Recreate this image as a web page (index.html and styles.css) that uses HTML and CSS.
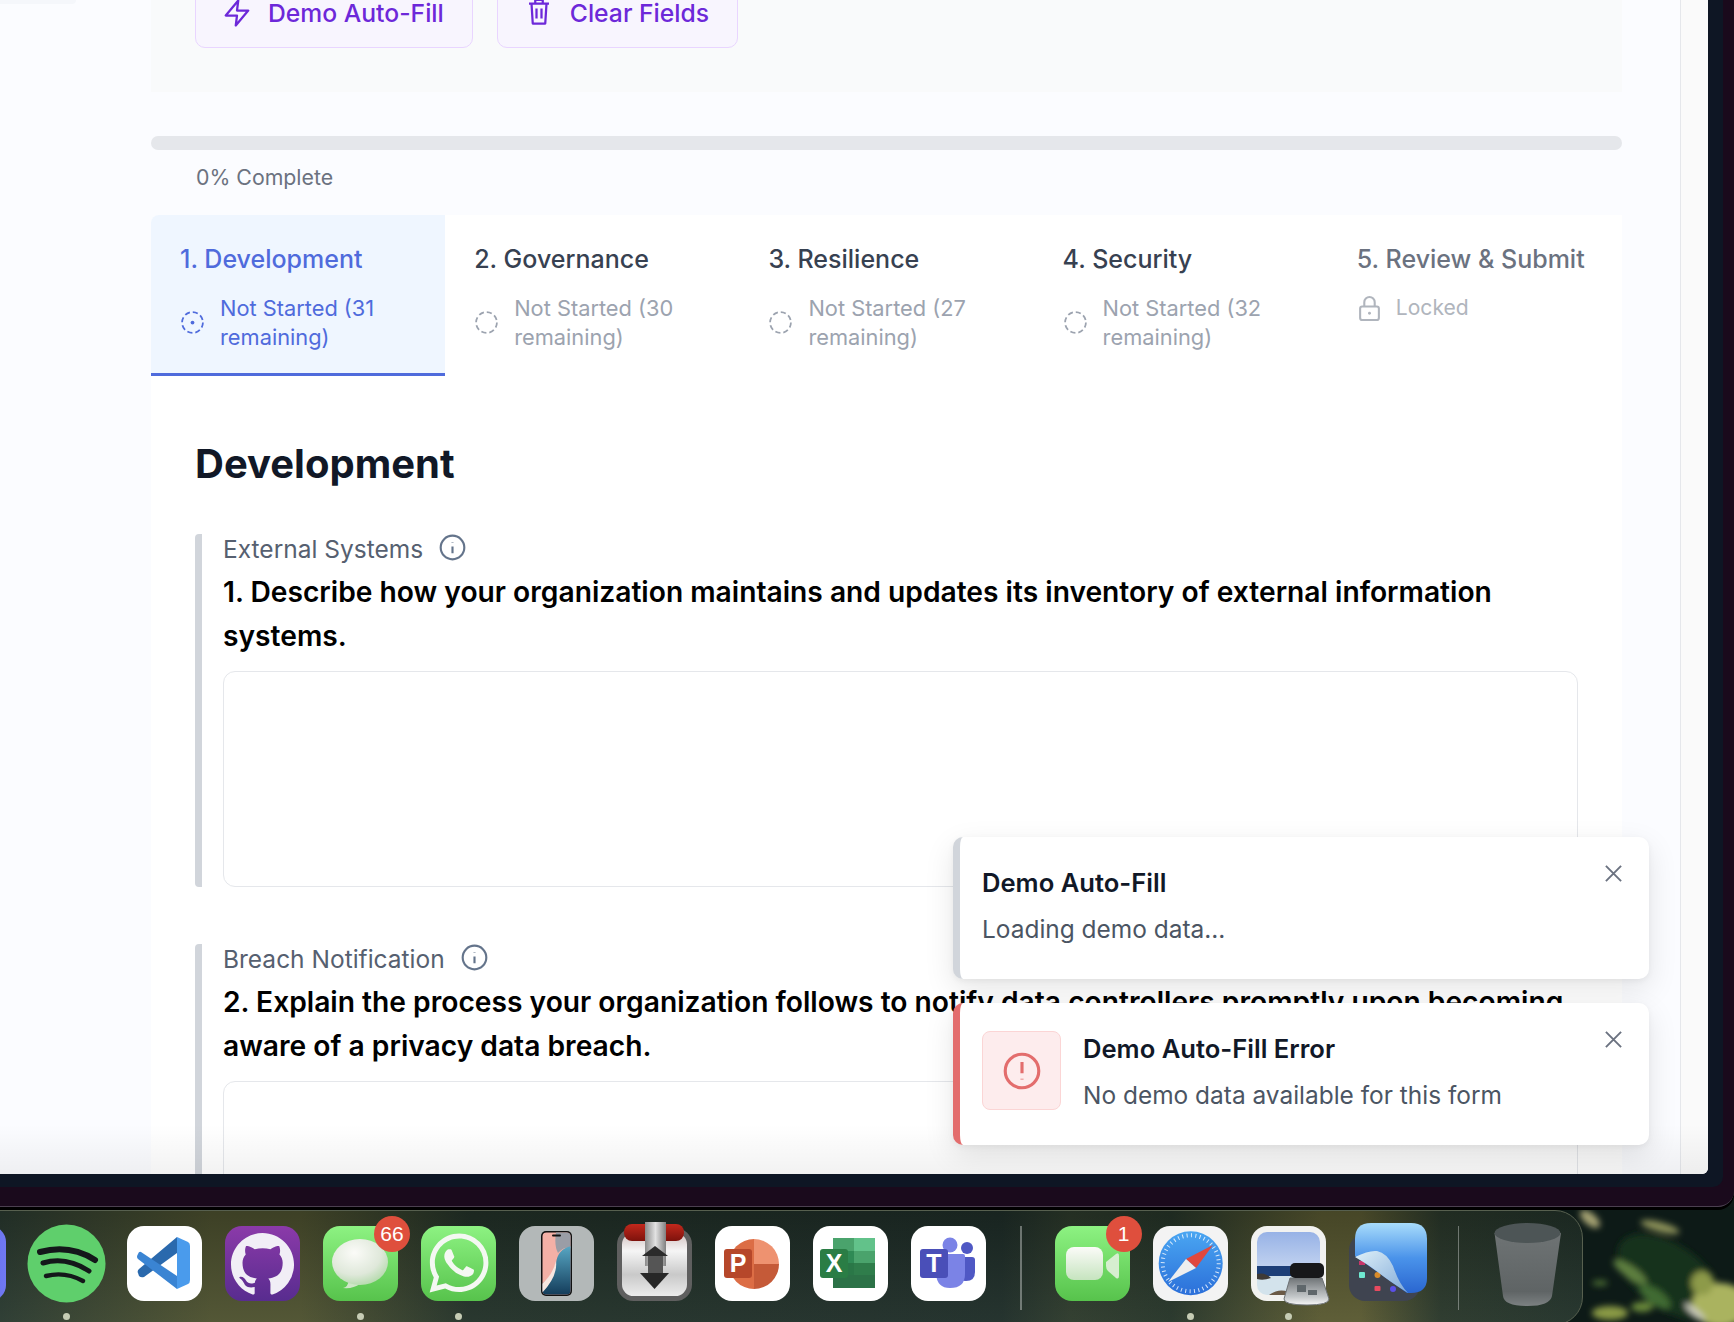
FILE: index.html

```html
<!DOCTYPE html>
<html lang="en">
<head>
    <meta charset="UTF-8">
    <meta name="viewport" content="width=device-width, initial-scale=1.0">
    <title>Demo Form</title>
    <link rel="stylesheet" href="styles.css">
</head>
<body>
<div class="monitor">
  <div class="frame">
    <div class="window">
      <div class="side-nub"></div>
      <div class="main">
        <div class="demo-panel">
          <button class="demo-btn">
            <svg class="btn-icon" viewBox="0 0 24 24"><polygon points="13 2 3 14 12 14 11 22 21 10 12 10"/></svg>
            Demo Auto-Fill
          </button>
          <button class="demo-btn">
            <svg class="btn-icon btn-icon-trash" viewBox="0 0 24 24"><path d="M4 6h16M9 6V3h6v3M6 6l1 16h10l1-16M10 10v8M14 10v8"/></svg>
            Clear Fields
          </button>
        </div>

        <div class="progress"></div>
        <p class="progress-label">0% Complete</p>

        <div class="card">
          <div class="tabs">
            <div class="tab active">
              <div class="tab-title">1. Development</div>
              <div class="tab-status">
                <svg class="status-icon" viewBox="0 0 24 24"><circle class="dash" cx="12" cy="12" r="10"/><circle class="dot" cx="12" cy="12" r="1.8"/></svg>
                <span>Not Started (31 remaining)</span>
              </div>
            </div>
            <div class="tab">
              <div class="tab-title">2. Governance</div>
              <div class="tab-status">
                <svg class="status-icon" viewBox="0 0 24 24"><circle class="dash" cx="12" cy="12" r="10"/></svg>
                <span>Not Started (30 remaining)</span>
              </div>
            </div>
            <div class="tab">
              <div class="tab-title">3. Resilience</div>
              <div class="tab-status">
                <svg class="status-icon" viewBox="0 0 24 24"><circle class="dash" cx="12" cy="12" r="10"/></svg>
                <span>Not Started (27 remaining)</span>
              </div>
            </div>
            <div class="tab">
              <div class="tab-title">4. Security</div>
              <div class="tab-status">
                <svg class="status-icon" viewBox="0 0 24 24"><circle class="dash" cx="12" cy="12" r="10"/></svg>
                <span>Not Started (32 remaining)</span>
              </div>
            </div>
            <div class="tab locked">
              <div class="tab-title">5. Review &amp; Submit</div>
              <div class="tab-status">
                <svg class="status-icon lock" viewBox="0 0 24 24"><rect x="3" y="10" width="18" height="13" rx="2"/><path d="M7 10V6a5 5 0 0 1 10 0v4"/><circle class="lock-dot" cx="12" cy="16.5" r="1.4"/></svg>
                <span>Locked</span>
              </div>
            </div>
          </div>

          <div class="section">
            <h2 class="section-title">Development</h2>

            <div class="field">
              <div class="field-label">External Systems
                <svg class="info" viewBox="0 0 24 24"><circle cx="12" cy="12" r="10.5"/><path d="M12 11v6M12 7v.6"/></svg>
              </div>
              <div class="question">1. Describe how your organization maintains and updates its inventory of external information systems.</div>
              <textarea class="answer"></textarea>
            </div>

            <div class="field">
              <div class="field-label">Breach Notification
                <svg class="info" viewBox="0 0 24 24"><circle cx="12" cy="12" r="10.5"/><path d="M12 11v6M12 7v.6"/></svg>
              </div>
              <div class="question">2. Explain the process your organization follows to notify data controllers promptly upon becoming aware of a privacy data breach.</div>
              <textarea class="answer"></textarea>
            </div>
          </div>
        </div>
      </div>
      <div class="strip"></div>

      <div class="toasts">
        <div class="toast">
          <div class="toast-text">
            <div class="toast-title">Demo Auto-Fill</div>
            <div class="toast-body">Loading demo data...</div>
          </div>
          <svg class="toast-close" viewBox="0 0 20 20"><path d="M2 2l16 16M18 2L2 18"/></svg>
        </div>
        <div class="toast toast-error">
          <div class="toast-icon">
            <svg viewBox="0 0 34 34"><circle cx="17" cy="17" r="15"/><path d="M17 9v10M17 24v.6"/></svg>
          </div>
          <div class="toast-text">
            <div class="toast-title">Demo Auto-Fill Error</div>
            <div class="toast-body">No demo data available for this form</div>
          </div>
          <svg class="toast-close" viewBox="0 0 20 20"><path d="M2 2l16 16M18 2L2 18"/></svg>
        </div>
      </div>
    </div>
  </div>
</div>

<div class="desktop">
  <!-- blurred foliage of the wallpaper -->
  <svg class="wallpaper" viewBox="0 0 1734 115">
    <defs><filter id="soft" x="-30%" y="-30%" width="160%" height="160%"><feGaussianBlur stdDeviation="3"/></filter></defs>
    <g filter="url(#soft)">
      <ellipse cx="1670" cy="70" rx="60" ry="32" fill="#16301d" transform="rotate(35 1670 70)"/>
      <ellipse cx="1590" cy="12" rx="12" ry="6" fill="#a5a272" transform="rotate(40 1590 12)"/>
      <ellipse cx="1660" cy="20" rx="20" ry="5" fill="#8b9058" transform="rotate(15 1660 20)"/>
      <ellipse cx="1630" cy="65" rx="20" ry="6" fill="#5f8040" transform="rotate(35 1630 65)"/>
      <ellipse cx="1655" cy="90" rx="18" ry="8" fill="#3f6a32" transform="rotate(35 1655 90)"/>
      <ellipse cx="1720" cy="98" rx="28" ry="22" fill="#aab35f"/>
      <ellipse cx="1702" cy="76" rx="11" ry="12" fill="#8d9a48"/>
      <ellipse cx="1610" cy="106" rx="18" ry="7" fill="#8a9a45"/>
      <ellipse cx="1642" cy="100" rx="11" ry="5" fill="#6a8a3a"/>
      <ellipse cx="1600" cy="76" rx="8" ry="3" fill="#4a6a30"/>
      <ellipse cx="1695" cy="105" rx="13" ry="3" fill="#d0d0c4" transform="rotate(40 1695 105)"/>
    </g>
  </svg>
  <div class="dock">
    <div class="dock-item"><svg viewBox="0 0 75 75"><defs><linearGradient id="launch" x1="0" y1="0" x2="1" y2="0"><stop offset="0" stop-color="#4f5fe0"/><stop offset="1" stop-color="#7078f2"/></linearGradient></defs><rect width="75" height="75" rx="16" fill="url(#launch)"/></svg></div>

    <!-- spotify -->
    <div class="dock-item running"><svg viewBox="0 0 75 75"><circle cx="37.5" cy="37.5" r="39" fill="#5fcf6c"/><g fill="none" stroke="#14181a" stroke-linecap="round"><path d="M11 26Q41 18 66 34" stroke-width="6"/><path d="M14 37Q37 30 60 45" stroke-width="5"/><path d="M17 50Q36 45 54 55" stroke-width="4.4"/></g></svg></div>

    <!-- vs code -->
    <div class="dock-item"><svg viewBox="0 0 75 75"><rect width="75" height="75" rx="17" fill="#fff"/><path d="M50 11V27L17 51Q14 52 12 50L11 47Q10 45 12 43Z" fill="#2a69ad"/><path d="M14 26L50 50V63L11 33Q9 31 11 28Q12 25 14 26Z" fill="#3a84d3"/><path d="M50 11L61 16Q63 17 63 20V54Q63 57 61 58L50 63Z" fill="#4a9bec"/></svg></div>

    <!-- github desktop -->
    <div class="dock-item"><svg viewBox="0 0 75 75"><defs><linearGradient id="gh" x1="0" y1="0" x2="0" y2="1"><stop offset="0" stop-color="#8b3aa9"/><stop offset="1" stop-color="#582c8f"/></linearGradient></defs><rect width="75" height="75" rx="17" fill="url(#gh)"/><g transform="translate(6 7) scale(3.94)"><path fill="#f1eef6" d="M8 0C3.58 0 0 3.58 0 8c0 3.54 2.29 6.53 5.47 7.59.4.07.55-.17.55-.38 0-.19-.01-.82-.01-1.49-2.01.37-2.53-.49-2.69-.94-.09-.23-.48-.94-.82-1.13-.28-.15-.68-.52-.01-.53.63-.01 1.08.58 1.23.82.72 1.21 1.87.87 2.33.66.07-.52.28-.87.51-1.07-1.78-.2-3.64-.89-3.64-3.95 0-.87.31-1.59.82-2.15-.08-.2-.36-1.02.08-2.12 0 0 .67-.21 2.2.82.64-.18 1.32-.27 2-.27.68 0 1.36.09 2 .27 1.53-1.04 2.2-.82 2.2-.82.44 1.1.16 1.92.08 2.12.51.56.82 1.27.82 2.15 0 3.07-1.87 3.75-3.65 3.95.29.25.54.73.54 1.48 0 1.07-.01 1.93-.01 2.2 0 .21.15.46.55.38A8.013 8.013 0 0016 8c0-4.42-3.58-8-8-8z"/></g></svg></div>

    <!-- messages -->
    <div class="dock-item running"><svg viewBox="0 0 75 75"><defs><linearGradient id="gr" x1="0" y1="0" x2="0" y2="1"><stop offset="0" stop-color="#8df282"/><stop offset="1" stop-color="#57c34c"/></linearGradient><radialGradient id="bub" cx=".4" cy=".3" r=".8"><stop offset="0" stop-color="#fbfbf8"/><stop offset=".6" stop-color="#dfe8da"/><stop offset="1" stop-color="#a9d6a0"/></radialGradient></defs><rect width="75" height="75" rx="17" fill="url(#gr)"/><path d="M26 54Q25 61 20 62Q30 63 37 58Z" fill="#cfe6c8"/><ellipse cx="37" cy="36" rx="28" ry="23" fill="url(#bub)"/></svg><span class="dock-badge">66</span></div>

    <!-- whatsapp -->
    <div class="dock-item running"><svg viewBox="0 0 75 75"><rect width="75" height="75" rx="17" fill="url(#gr)"/><g transform="translate(8.5 7.5) scale(2.46)"><path fill="#f4f8f2" d="M17.472 14.382c-.297-.149-1.758-.867-2.03-.967-.273-.099-.471-.148-.67.15-.197.297-.767.966-.94 1.164-.173.199-.347.223-.644.075-.297-.15-1.255-.463-2.39-1.475-.883-.788-1.48-1.761-1.653-2.059-.173-.297-.018-.458.13-.606.134-.133.298-.347.446-.52.149-.174.198-.298.298-.497.099-.198.05-.371-.025-.52-.075-.149-.669-1.612-.916-2.207-.242-.579-.487-.5-.669-.51-.173-.008-.371-.01-.57-.01-.198 0-.52.074-.792.372-.272.297-1.04 1.016-1.04 2.479 0 1.462 1.065 2.875 1.213 3.074.149.198 2.096 3.2 5.077 4.487.709.306 1.262.489 1.694.625.712.227 1.36.195 1.871.118.571-.085 1.758-.719 2.006-1.413.248-.694.248-1.289.173-1.413-.074-.124-.272-.198-.57-.347m-5.421 7.403h-.004a9.87 9.87 0 01-5.031-1.378l-.361-.214-3.741.982.998-3.648-.235-.374a9.86 9.86 0 01-1.51-5.26c.001-5.45 4.436-9.884 9.888-9.884 2.64 0 5.122 1.03 6.988 2.898a9.825 9.825 0 012.893 6.994c-.003 5.45-4.437 9.884-9.885 9.884m8.413-18.297A11.815 11.815 0 0012.05 0C5.495 0 .16 5.335.157 11.892c0 2.096.547 4.142 1.588 5.945L.057 24l6.305-1.654a11.882 11.882 0 005.683 1.448h.005c6.554 0 11.89-5.335 11.893-11.893a11.821 11.821 0 00-3.48-8.413z"/></g></svg></div>

    <!-- iphone mirroring -->
    <div class="dock-item"><svg viewBox="0 0 75 75"><defs><linearGradient id="wave" x1="0" y1="0" x2="0" y2="1"><stop offset="0" stop-color="#58a7c4"/><stop offset="1" stop-color="#123a58"/></linearGradient><clipPath id="scr"><rect x="23.5" y="6.5" width="28" height="62" rx="4"/></clipPath></defs><rect width="75" height="75" rx="16" fill="#b3b8b8"/><rect x="22" y="5" width="31" height="65" rx="5" fill="#111"/><g clip-path="url(#scr)"><rect x="23" y="6" width="30" height="64" fill="#f4b0a6"/><path d="M37 6Q35 20 39 27Q46 19 53 23V6Z" fill="#9a9da6"/><path d="M53 20Q39 22 37 37Q34 50 23 58V70H53Z" fill="url(#wave)"/><path d="M23 58Q34 48 37 35Q39 50 23 67Z" fill="#f6e6e0"/></g><rect x="33" y="8.5" width="9" height="2" rx="1" fill="#111"/></svg></div>

    <!-- transmit -->
    <div class="dock-item"><svg viewBox="0 0 75 75"><defs><linearGradient id="tbox" x1="0" y1="0" x2="0" y2="1"><stop offset="0" stop-color="#cdb9b8"/><stop offset=".3" stop-color="#f5f5f5"/><stop offset=".65" stop-color="#c9c9c9"/><stop offset="1" stop-color="#f0f0f0"/></linearGradient><linearGradient id="tsilver" x1="0" y1="0" x2="1" y2="0"><stop offset="0" stop-color="#8a8a8a"/><stop offset=".5" stop-color="#e2e2e2"/><stop offset="1" stop-color="#808080"/></linearGradient><linearGradient id="tred" x1="0" y1="0" x2="0" y2="1"><stop offset="0" stop-color="#c2281c"/><stop offset="1" stop-color="#7d120c"/></linearGradient></defs><rect x="2.5" y="4.5" width="70" height="68" rx="14" fill="url(#tbox)" stroke="#5f5f5f" stroke-width="5"/><rect x="7" y="-2" width="60" height="17" rx="8" fill="url(#tred)"/><rect x="28" y="-4" width="21" height="44" fill="url(#tsilver)"/><path d="M38 20L51 30H25Z" fill="#2b2b2b"/><rect x="31" y="30" width="15" height="18" fill="#555"/><path d="M23 47H52L37.5 63Z" fill="#272727"/></svg></div>

    <!-- powerpoint -->
    <div class="dock-item"><svg viewBox="0 0 75 75"><rect width="75" height="75" rx="17" fill="#fff"/><path d="M39 13A25 25 0 0 0 39 63Z" fill="#dc6d45"/><path d="M39 13A25 25 0 0 1 64 38H39Z" fill="#ee9270"/><path d="M39 38H64A25 25 0 0 1 39 63Z" fill="#c55a38"/><rect x="9" y="23" width="28" height="29" rx="3" fill="#b6472a"/><text class="app-letter" x="23" y="46">P</text></svg></div>

    <!-- excel -->
    <div class="dock-item"><svg viewBox="0 0 75 75"><rect width="75" height="75" rx="17" fill="#fff"/><rect x="20" y="12" width="21" height="13" fill="#4aa36c"/><rect x="41" y="12" width="21" height="13" fill="#62c28a"/><rect x="20" y="25" width="21" height="12" fill="#2f8a55"/><rect x="41" y="25" width="21" height="12" fill="#4aa36c"/><rect x="20" y="37" width="21" height="12" fill="#2a7747"/><rect x="41" y="37" width="21" height="12" fill="#2f7d4b"/><rect x="20" y="49" width="42" height="13" fill="#2c7247"/><rect x="7" y="23" width="28" height="29" rx="3" fill="#2a7d45"/><text class="app-letter" x="21" y="46">X</text></svg></div>

    <!-- teams -->
    <div class="dock-item"><svg viewBox="0 0 75 75"><rect width="75" height="75" rx="17" fill="#fff"/><circle cx="39" cy="19" r="7.5" fill="#7b83e6"/><circle cx="56" cy="22" r="6" fill="#4f58c4"/><path d="M46 31H61Q64 31 64 34V46Q64 55 55 55Q48 55 46 50Z" fill="#4f58c4"/><path d="M26 28H52Q54 28 54 30V48Q54 62 39 62Q26 62 25 48Z" fill="#7b83e6"/><rect x="9" y="23" width="28" height="29" rx="3" fill="#4a4fb8"/><text class="app-letter" x="23" y="46">T</text></svg></div>

    <div class="dock-sep"></div>

    <!-- facetime -->
    <div class="dock-item"><svg viewBox="0 0 75 75"><defs><linearGradient id="ftb" x1="0" y1="0" x2="0" y2="1"><stop offset="0" stop-color="#fbfbf8"/><stop offset="1" stop-color="#c6e4bf"/></linearGradient></defs><rect width="75" height="75" rx="17" fill="url(#gr)"/><rect x="11" y="21" width="37" height="33" rx="8" fill="url(#ftb)"/><path d="M51 36L61 28Q64 26 64 30V49Q64 54 61 52L53 45Q51 43 51 40Z" fill="#d6eed0"/></svg><span class="dock-badge">1</span></div>

    <!-- safari -->
    <div class="dock-item running"><svg viewBox="0 0 75 75"><defs><linearGradient id="saf" x1="0" y1="0" x2="0" y2="1"><stop offset="0" stop-color="#4aa6f2"/><stop offset="1" stop-color="#2b6fd9"/></linearGradient></defs><rect width="75" height="75" rx="17" fill="#f3f3f3"/><circle cx="37.7" cy="37.3" r="32" fill="url(#saf)"/><circle cx="37.7" cy="37.3" r="28" fill="none" stroke="#fff" stroke-width="4" stroke-dasharray="1 3.4" opacity=".8"/><path d="M60 19L33 33L43 42Z" fill="#e0483e"/><path d="M15 56L43 42L33 33Z" fill="#eeeeee"/></svg></div>

    <!-- preview -->
    <div class="dock-item running"><svg viewBox="0 0 75 75"><defs><linearGradient id="sky" x1="0" y1="0" x2="0" y2="1"><stop offset="0" stop-color="#97b2e6"/><stop offset="1" stop-color="#c2d3f0"/></linearGradient><linearGradient id="glass" x1="0" y1="0" x2="0" y2="1"><stop offset="0" stop-color="#6f7477"/><stop offset=".7" stop-color="#c4c8ca"/><stop offset="1" stop-color="#f7f7f7"/></linearGradient><clipPath id="photo"><rect x="6" y="6" width="63" height="63" rx="10"/></clipPath></defs><rect width="75" height="75" rx="16" fill="#f2f2f0"/><g clip-path="url(#photo)"><rect x="6" y="6" width="63" height="36" fill="url(#sky)"/><rect x="6" y="40" width="63" height="10" fill="#1d3f78"/><rect x="6" y="50" width="63" height="20" fill="#d3e3ec"/><path d="M6 48Q14 46 20 52Q12 55 6 53Z" fill="#3f3a36"/><path d="M18 69Q30 60 44 69Z" fill="#6b5a46"/></g><path d="M39 52H71L78 73Q78 79 56 79Q33 79 33 73Z" fill="url(#glass)" stroke="#6d7275"/><rect x="46" y="59" width="9" height="7" fill="#5f676b"/><rect x="57" y="64" width="9" height="5" fill="#5f676b"/><rect x="39" y="37" width="34" height="15" rx="5" fill="#17181a"/></svg></div>

    <!-- page curl app -->
    <div class="dock-item"><svg viewBox="0 0 75 75"><defs><linearGradient id="pg" x1="0" y1="0" x2="0" y2="1"><stop offset="0" stop-color="#a8dcfb"/><stop offset=".5" stop-color="#4a93ea"/><stop offset="1" stop-color="#2a66d0"/></linearGradient><linearGradient id="curl" x1="0" y1="0" x2="1" y2="1"><stop offset="0" stop-color="#dff0f8"/><stop offset="1" stop-color="#7fa9d8"/></linearGradient></defs><rect x="0" y="8" width="71" height="67" rx="16" fill="#3f4450"/><path d="M22-3H62Q78-3 78 13V52Q78 67 62 67H58L6 30V13Q6-3 22-3Z" fill="url(#pg)"/><rect x="10" y="35" width="6" height="4" fill="#c9366a"/><rect x="10" y="46" width="6" height="6" rx="1" fill="#6fe8d0"/><circle cx="28.5" cy="49" r="3" fill="#d88a2a"/><rect x="25.5" y="60" width="6" height="5" rx="1" fill="#e84a5f"/><circle cx="44" cy="63" r="3" fill="#5b50e8"/><path d="M6 31Q20 24 28 25Q38 27 44 40Q50 58 59 67Q40 55 30 47Q20 39 6 31Z" fill="url(#curl)"/></svg></div>

    <div class="dock-sep"></div>

    <!-- trash -->
    <div class="dock-item dock-trash"><svg viewBox="0 0 75 75"><defs><linearGradient id="tr" x1="0" y1="0" x2="0" y2="1"><stop offset="0" stop-color="#6e7374"/><stop offset=".8" stop-color="#5f6465"/><stop offset="1" stop-color="#7c8182"/></linearGradient></defs><path d="M.5 7L9 70Q10 80 33.5 80Q56 80 58 70L67 7Z" fill="url(#tr)"/><ellipse cx="33.5" cy="7" rx="33" ry="10" fill="#4d5556"/></svg></div>
  </div>
</div>
</body>
</html>
```

FILE: styles.css

```css
* {
    box-sizing: border-box;
}

html,
body {
    margin: 0;
    padding: 0;
    height: 1322px;
    overflow: hidden;
}

body {
    font-family: Inter, "Noto Sans", sans-serif;
    background-color: #101b18;
    color: #111827;
}

/* screen edges around the browser window */
.monitor {
    height: 1207px;
    background-color: #1a0a1c;
    border-bottom: 1px solid #4b4050;
    border-bottom-right-radius: 16px;
    box-shadow: 0 3px 0 #000;
    position: relative;
    z-index: 1;
}

.frame {
    width: 1723px;
    height: 1187px;
    background-color: #0e1624;
    border-bottom-right-radius: 10px;
}

.window {
    position: relative;
    display: flex;
    width: 1708px;
    height: 1174px;
    overflow: hidden;
    background-color: #fbfcff;
    border-bottom-right-radius: 6px;
}

/* grey fade along the bottom edge */
.window::after {
    content: "";
    position: absolute;
    left: 0;
    right: 0;
    bottom: 0;
    height: 50px;
    background: linear-gradient(rgba(0, 0, 0, 0), rgba(0, 0, 0, 0.05));
}

.side-nub {
    position: absolute;
    top: 0;
    left: 0;
    width: 76px;
    height: 4px;
    background-color: #f5f7fb;
    border-bottom-right-radius: 4px;
}

.main {
    flex: 1;
    min-width: 0;
    padding: 0 58px 0 151px;
}

.strip {
    width: 28px;
    background-color: #fafafa;
    border-left: 1px solid #e5e7eb;
}

/* demo buttons, the top of this panel is scrolled out of view */
.demo-panel {
    display: flex;
    align-items: flex-end;
    gap: 24px;
    height: 92px;
    padding: 0 0 44px 44px;
    overflow: hidden;
    background-color: #f9fafb;
}

.demo-btn {
    display: flex;
    flex-shrink: 0;
    align-items: center;
    gap: 16px;
    height: 70px;
    padding: 0 28px 0 26px;
    font-family: inherit;
    font-size: 24.7px;
    font-weight: 500;
    line-height: 24px;
    color: #6d28d9;
    background-color: #f8f5fe;
    border: 1px solid #e9d5ff;
    border-radius: 10px;
}

.btn-icon {
    width: 30px;
    height: 30px;
    fill: none;
    stroke: #6d28d9;
    stroke-width: 1.8;
    stroke-linejoin: round;
}

.btn-icon-trash {
    margin-top: -4px;
}

.progress {
    height: 14px;
    margin-top: 44px;
    background-color: #e5e7eb;
    border-radius: 7px;
}

.progress-label {
    margin: 13px 0 24px;
    padding-left: 45px;
    font-size: 21.3px;
    line-height: 28px;
    color: #6b7280;
}

.card {
    background-color: #fff;
    border-top-left-radius: 8px;
    overflow: hidden;
}

.tabs {
    display: grid;
    grid-template-columns: repeat(5, 1fr);
}

.tab {
    padding: 28px 10px 22px 29px;
    border-bottom: 3px solid transparent;
}

.tab.active {
    background-color: #eff6ff;
    border-bottom-color: #4f6bdc;
}

.tab-title {
    font-size: 25px;
    font-weight: 500;
    line-height: 32px;
    color: #374151;
    white-space: nowrap;
}

.tab.active .tab-title {
    color: #4f6bdc;
}

.tab.locked .tab-title {
    color: #6b7280;
}

.tab-status {
    display: flex;
    align-items: center;
    gap: 15px;
    margin-top: 19px;
    padding-right: 30px;
    font-size: 21.8px;
    line-height: 28.5px;
    color: #9ca3af;
}

.tab.active .tab-status {
    color: #4f6bdc;
}

.tab.locked .tab-status {
    gap: 14px;
    font-size: 21.1px;
    color: #b0b5bd;
}

.status-icon {
    flex-shrink: 0;
    width: 25px;
    height: 25px;
    fill: none;
    stroke: currentColor;
    stroke-width: 1.7;
}

.status-icon .dash {
    stroke-dasharray: 5 2.85;
}

.status-icon .dot {
    fill: currentColor;
    stroke: none;
}

.status-icon.lock {
    stroke-width: 2;
}

.lock-dot {
    fill: currentColor;
    stroke: none;
}

.section {
    padding: 64px 44px 0;
}

.section-title {
    margin: 0 0 46px;
    font-size: 40px;
    font-weight: 700;
    line-height: 48px;
    color: #111827;
}

.field {
    margin-bottom: 57px;
    padding-left: 21px;
    border-left: 7px solid #d1d5db;
    border-radius: 4px;
}

.field-label {
    display: flex;
    align-items: center;
    gap: 16px;
    font-size: 24.5px;
    line-height: 30px;
    color: #566070;
}

.info {
    width: 27px;
    height: 27px;
    margin-top: -3px;
    fill: none;
    stroke: #64748b;
    stroke-width: 1.9;
}

.question {
    margin-top: 6px;
    font-size: 28.2px;
    font-weight: 600;
    line-height: 44px;
    color: #000;
}

.answer {
    display: block;
    width: 100%;
    height: 216px;
    margin-top: 13px;
    background-color: #fff;
    border: 1px solid #e5e7eb;
    border-radius: 12px;
    resize: none;
}

/* notifications */
.toasts {
    position: absolute;
    right: 59px;
    bottom: 29px;
    z-index: 2;
    display: flex;
    flex-direction: column;
    gap: 24px;
    width: 696px;
}

.toast {
    display: flex;
    align-items: center;
    gap: 22px;
    height: 142px;
    padding: 0 0 0 22px;
    background-color: #fff;
    border-left: 7px solid #d1d5db;
    border-radius: 10px;
    box-shadow: 0 10px 30px rgba(0, 0, 0, 0.1), 0 2px 6px rgba(0, 0, 0, 0.05);
    position: relative;
}

.toast-error {
    border-left-color: #e36d6d;
}

.toast-icon {
    display: flex;
    flex-shrink: 0;
    align-items: center;
    justify-content: center;
    width: 79px;
    height: 79px;
    margin-top: -7px;
    background-color: #fdeced;
    border: 1px solid #fbd5d5;
    border-radius: 8px;
}

.toast-icon svg {
    width: 38px;
    height: 38px;
    fill: none;
    stroke: #e36d6d;
    stroke-width: 2.8;
}

.toast-text {
    margin-top: -5px;
}

.toast-title {
    font-size: 25.6px;
    font-weight: 600;
    line-height: 32px;
    color: #111827;
}

.toast-body {
    margin-top: 14px;
    font-size: 24.45px;
    line-height: 32px;
    color: #4b5563;
}

.toast-close {
    position: absolute;
    top: 27px;
    right: 26px;
    width: 19px;
    height: 19px;
    fill: none;
    stroke: #6b7280;
    stroke-width: 2;
}

/* mac desktop + dock */
.desktop {
    position: relative;
    height: 115px;
    overflow: hidden;
    background-color: #0d1a17;
}

.wallpaper {
    position: absolute;
    top: 0;
    left: 0;
    width: 1734px;
    height: 115px;
}

.dock {
    position: relative;
    display: flex;
    align-items: flex-start;
    gap: 23px;
    width: 1683px;
    height: 115px;
    margin: 3px 0 0 -100px;
    padding: 15px 0 0 30px;
    border: 1px solid #57604f;
    border-bottom-right-radius: 28px;
    border-top-right-radius: 28px;
    background:
        linear-gradient(rgba(0, 0, 0, 0.22), rgba(255, 255, 255, 0.03)),
        linear-gradient(90deg, #2a3a30 100px, #4e5230 310px, #4e5230 400px, #233229 570px, #1f2e29 1100px, #2e3b2c 1170px, #263529 1270px, #5a5a32 1420px, #5a5a32 1460px, #2a382b 1540px, #22322a 1683px);
}

.dock-item {
    position: relative;
    flex-shrink: 0;
    width: 75px;
    height: 75px;
}

.dock-item svg {
    display: block;
    width: 75px;
    height: 75px;
    overflow: visible;
}

.dock-item.running::after {
    content: "";
    position: absolute;
    left: 34px;
    top: 87px;
    width: 7px;
    height: 7px;
    border-radius: 50%;
    background-color: #c6ccb4;
}

.dock-badge {
    position: absolute;
    top: -10px;
    right: -12px;
    width: 36px;
    height: 36px;
    font-family: "Liberation Sans", sans-serif;
    font-size: 21px;
    line-height: 36px;
    text-align: center;
    color: #fff;
    background-color: #df4f3d;
    border-radius: 50%;
}

.dock-sep {
    flex-shrink: 0;
    width: 1.5px;
    height: 84px;
    margin: 0 10px 0 11px;
    background-color: rgba(255, 255, 255, 0.35);
}

.dock-trash {
    margin-left: 2px;
}

.app-letter {
    font-family: "Liberation Sans", sans-serif;
    font-size: 25px;
    font-weight: 700;
    text-anchor: middle;
    fill: #fff;
}
```
